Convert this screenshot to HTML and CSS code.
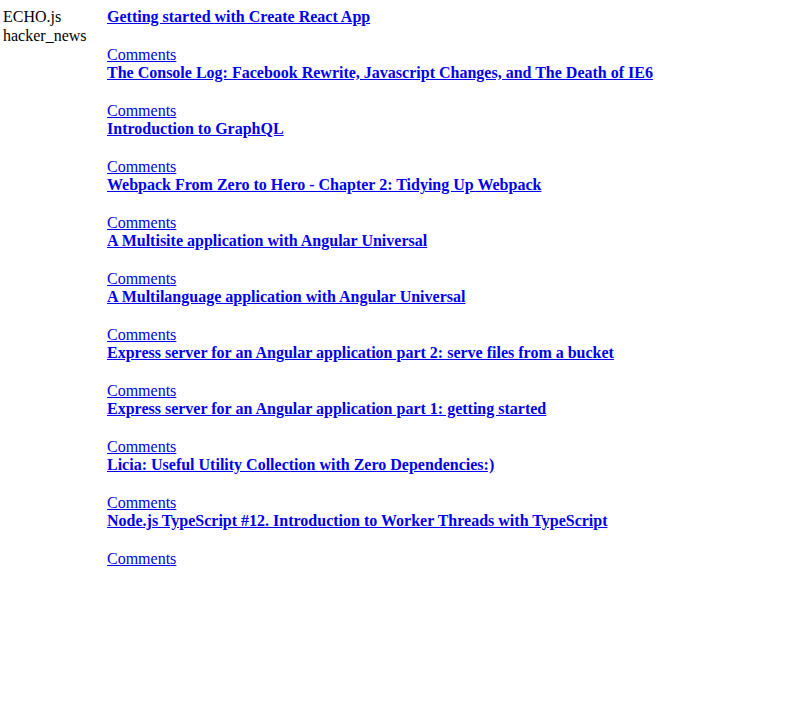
FILE: index.html
```html
<!DOCTYPE html>
<html>
<head>
<meta charset="utf-8">
<link rel="stylesheet" href="styles.css">
</head>
<body>
<div class="layout">
  <nav class="sidebar">
    <div>ECHO.js</div>
    <div>hacker_news</div>
  </nav>
  <main class="feed">
    <div class="item"><a class="title" href="#">Getting started with Create React App</a><div class="spacer"></div><a class="comments" href="#">Comments</a></div>
    <div class="item"><a class="title" href="#">The Console Log: Facebook Rewrite, Javascript Changes, and The Death of IE6</a><div class="spacer"></div><a class="comments" href="#">Comments</a></div>
    <div class="item"><a class="title" href="#">Introduction to GraphQL</a><div class="spacer"></div><a class="comments" href="#">Comments</a></div>
    <div class="item"><a class="title" href="#">Webpack From Zero to Hero - Chapter 2: Tidying Up Webpack</a><div class="spacer"></div><a class="comments" href="#">Comments</a></div>
    <div class="item"><a class="title" href="#">A Multisite application with Angular Universal</a><div class="spacer"></div><a class="comments" href="#">Comments</a></div>
    <div class="item"><a class="title" href="#">A Multilanguage application with Angular Universal</a><div class="spacer"></div><a class="comments" href="#">Comments</a></div>
    <div class="item"><a class="title" href="#">Express server for an Angular application part 2: serve files from a bucket</a><div class="spacer"></div><a class="comments" href="#">Comments</a></div>
    <div class="item"><a class="title" href="#">Express server for an Angular application part 1: getting started</a><div class="spacer"></div><a class="comments" href="#">Comments</a></div>
    <div class="item"><a class="title" href="#">Licia: Useful Utility Collection with Zero Dependencies:)</a><div class="spacer"></div><a class="comments" href="#">Comments</a></div>
    <div class="item"><a class="title" href="#">Node.js TypeScript #12. Introduction to Worker Threads with TypeScript</a><div class="spacer"></div><a class="comments" href="#">Comments</a></div>
  </main>
</div>
</body>
</html>
```
FILE: styles.css
```css
html, body {
  margin: 0;
  padding: 0;
  background: #fff;
}
body {
  font-family: "Liberation Serif", "Times New Roman", serif;
  font-size: 16px;
  line-height: 18.667px;
  color: #000;
  padding: 8px 0 0 3px;
}
.layout {
  display: flex;
}
.sidebar {
  width: 104px;
  flex: none;
}
.feed {
  flex: 1;
}
.item a {
  color: #0000ee;
  text-decoration: underline;
  display: block;
  width: fit-content;
}
.item .title {
  font-weight: bold;
}
.spacer {
  height: 19.667px;
}
.item .comments {
  line-height: 17.667px;
}
```
